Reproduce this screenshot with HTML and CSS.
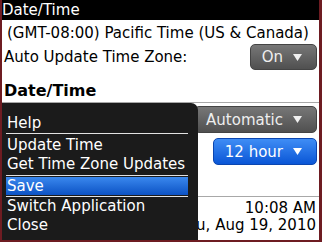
FILE: index.html
```html
<!DOCTYPE html>
<html lang="en">
<head>
    <meta charset="UTF-8">
    <meta name="viewport" content="width=device-width, initial-scale=1.0">
    <title>Date/Time</title>
    <link rel="stylesheet" href="styles.css">
</head>
<body>
    <div class="screen">
        <div class="title">Date/Time</div>
        <div class="zone">(GMT-08:00) Pacific Time (US &amp; Canada)</div>
        <div class="row auto-row">
            <span>Auto Update Time Zone:</span>
            <span class="picker small">On
                <svg width="9" height="7" viewBox="0 0 9 7"><path d="M0 0H9L4.5 7Z" fill="#f0f0f0"/></svg>
            </span>
        </div>

        <div class="section">Date/Time</div>
        <div class="row field first">
            <span class="picker">Automatic
                <svg width="9" height="7" viewBox="0 0 9 7"><path d="M0 0H9L4.5 7Z" fill="#f0f0f0"/></svg>
            </span>
        </div>
        <div class="row field">
            <span class="picker focus">12 hour
                <svg width="9" height="7" viewBox="0 0 9 7"><path d="M0 0H9L4.5 7Z" fill="#fff"/></svg>
            </span>
        </div>

        <div class="stamp">
            <div class="stamp-line">10:08 AM</div>
            <div class="stamp-line">Thu, Aug 19, 2010</div>
        </div>

        <div class="menu">
            <div class="menu-item">Help</div>
            <div class="menu-sep"></div>
            <div class="menu-item gap">Update Time</div>
            <div class="menu-item">Get Time Zone Updates</div>
            <div class="menu-sep thin"></div>
            <div class="menu-item active">Save</div>
            <div class="menu-sep thin"></div>
            <div class="menu-item">Switch Application</div>
            <div class="menu-item">Close</div>
        </div>
    </div>
</body>
</html>
```

FILE: styles.css
```css
* {
    box-sizing: border-box;
}
body {
    margin: 0;
    font-family: "DejaVu Sans", sans-serif;
    font-size: 15px;
    background-color: #6e1c22;
}
.screen {
    position: relative;
    width: 322px;
    height: 242px;
    background-color: #fff;
    border-left: 2px solid #6e1c22;
    border-right: 3px solid #6e1c22;
    border-bottom: 2px solid #6e1c22;
    overflow: hidden;
    color: #000;
}
.title {
    height: 20px;
    line-height: 20px;
    background-color: #000;
    color: #fff;
}
.zone {
    line-height: 18px;
    padding: 4px 0 2px 5px;
    white-space: nowrap;
}
.row {
    display: flex;
    justify-content: space-between;
    align-items: center;
    padding: 0 2px 0 2px;
    line-height: 18px;
    white-space: nowrap;
}
.auto-row {
    height: 26px;
}
.section {
    margin-top: 11px;
    padding: 0 0 2px 2px;
    font-size: 16px;
    font-weight: bold;
    line-height: 19px;
    border-bottom: 1px solid #a8a8a8;
}
.field {
    height: 27px;
    margin-top: 5px;
    justify-content: flex-end;
}
.field.first {
    margin-top: 3px;
}
.picker {
    display: inline-flex;
    align-items: center;
    gap: 10px;
    height: 27px;
    padding: 0 14px 0 11px;
    border: 1px solid #444;
    border-radius: 5px;
    background: linear-gradient(#777, #505050);
    color: #eee;
}
.picker.small {
    height: 26px;
}
.picker.focus {
    border-color: #0b46b0;
    background: linear-gradient(#3f8df5, #0a56d6);
    color: #fff;
}
.stamp {
    margin-top: 31px;
    padding: 3px 3px 0 0;
    border-top: 1px solid #a8a8a8;
    text-align: right;
}
.stamp-line {
    line-height: 17px;
}
.menu {
    position: absolute;
    left: 0;
    top: 103px;
    bottom: 0;
    width: 196px;
    padding: 11px 10px 0 4px;
    background-color: #1b1b1b;
    border-top-right-radius: 7px;
    color: #fff;
}
.menu-item {
    line-height: 19px;
    padding-left: 1px;
    white-space: nowrap;
}
.menu-item.gap {
    margin-top: 2px;
}
.menu-item.active {
    line-height: 18px;
    margin-top: 1px;
    background: linear-gradient(#3a88ee, #0c52c4);
}
.menu-sep {
    height: 1px;
    background-color: #e2e2e2;
}
.menu-sep.thin {
    margin-top: 1px;
}
```
